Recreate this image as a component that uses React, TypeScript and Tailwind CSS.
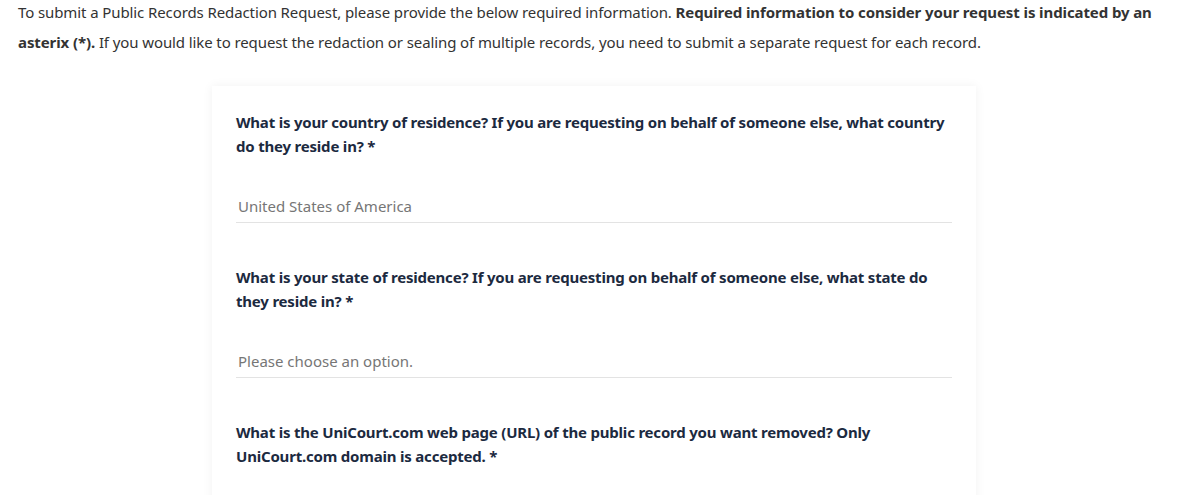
const questions = [
  {
    label:
      "What is your country of residence? If you are requesting on behalf of someone else, what country do they reside in? *",
    placeholder: "United States of America",
  },
  {
    label:
      "What is your state of residence? If you are requesting on behalf of someone else, what state do they reside in? *",
    placeholder: "Please choose an option.",
  },
  {
    label:
      "What is the UniCourt.com web page (URL) of the public record you want removed? Only UniCourt.com domain is accepted. *",
    placeholder: "",
  },
];

export default function App() {
  return (
    <div className="h-[495px] overflow-hidden bg-white font-['Noto_Sans',sans-serif]">
      <p className="-mt-[3px] px-[18px] text-[15px] leading-[30px] tracking-[-0.1px] text-[#333]">
        To submit a Public Records Redaction Request, please provide the below required information.{" "}
        <strong className="font-bold">
          Required information to consider your request is indicated by an asterix (*).
        </strong>{" "}
        If you would like to request the redaction or sealing of multiple records, you need to submit a separate
        request for each record.
      </p>

      <div className="ml-[212px] mt-[29px] w-[764px] bg-white px-6 pt-6 shadow-[0_0_10px_rgba(0,0,0,0.06)]">
        {questions.map((q, i) => (
          <div key={i} className="mb-[42px]">
            <label className="block text-[15px] font-bold leading-6 tracking-[-0.2px] text-[#1c2a3f]">
              {q.label}
            </label>
            <div className="mt-8 flex h-[33px] items-center border-b border-[#e3e3e3] px-[2px] text-[15px] text-[#767676]">
              {q.placeholder}
            </div>
          </div>
        ))}
      </div>
    </div>
  );
}
